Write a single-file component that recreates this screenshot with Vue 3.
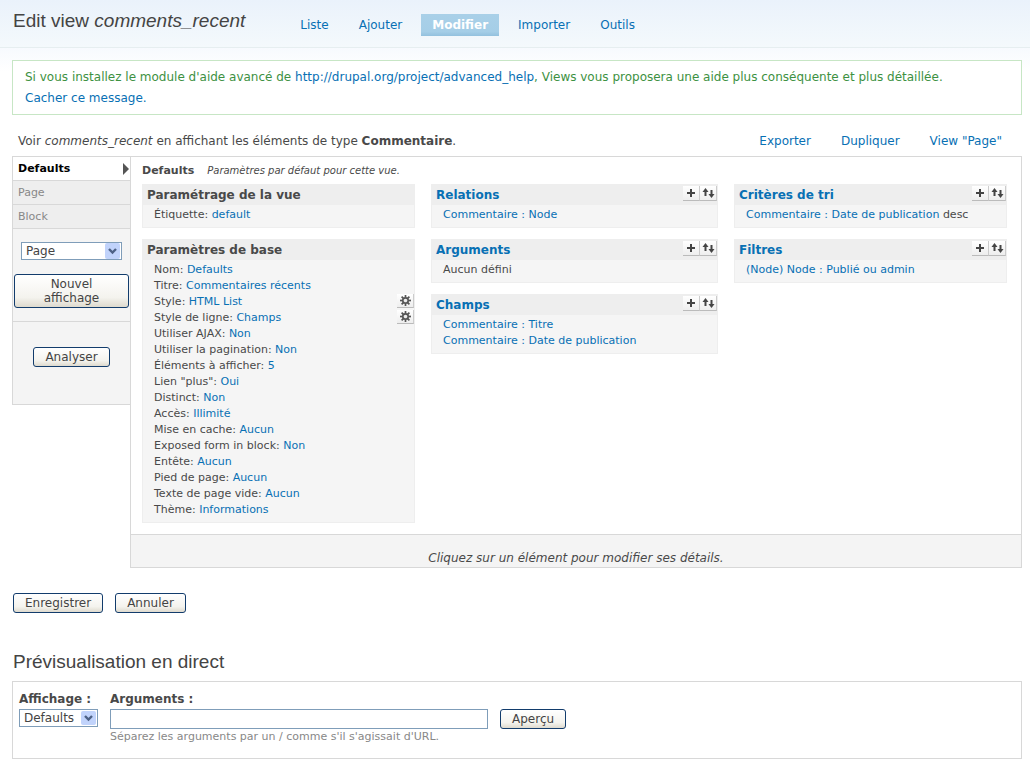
<script setup>
import { ref } from 'vue'

const tabs = [
  { label: 'Liste' },
  { label: 'Ajouter' },
  { label: 'Modifier', active: true },
  { label: 'Importer' },
  { label: 'Outils' },
]

const displays = ['Defaults', 'Page', 'Block']

const columns = [
  [
    {
      title: 'Paramétrage de la vue',
      items: [{ label: 'Étiquette:', link: 'default' }],
    },
    {
      title: 'Paramètres de base',
      items: [
        { label: 'Nom:', link: 'Defaults' },
        { label: 'Titre:', link: 'Commentaires récents' },
        { label: 'Style:', link: 'HTML List', gear: true },
        { label: 'Style de ligne:', link: 'Champs', gear: true },
        { label: 'Utiliser AJAX:', link: 'Non' },
        { label: 'Utiliser la pagination:', link: 'Non' },
        { label: 'Éléments à afficher:', link: '5' },
        { label: 'Lien "plus":', link: 'Oui' },
        { label: 'Distinct:', link: 'Non' },
        { label: 'Accès:', link: 'Illimité' },
        { label: 'Mise en cache:', link: 'Aucun' },
        { label: 'Exposed form in block:', link: 'Non' },
        { label: 'Entête:', link: 'Aucun' },
        { label: 'Pied de page:', link: 'Aucun' },
        { label: 'Texte de page vide:', link: 'Aucun' },
        { label: 'Thème:', link: 'Informations' },
      ],
    },
  ],
  [
    { title: 'Relations', editable: true, items: [{ link: 'Commentaire : Node' }] },
    { title: 'Arguments', editable: true, items: [{ label: 'Aucun défini' }] },
    {
      title: 'Champs',
      editable: true,
      items: [{ link: 'Commentaire : Titre' }, { link: 'Commentaire : Date de publication' }],
    },
  ],
  [
    {
      title: 'Critères de tri',
      editable: true,
      items: [{ link: 'Commentaire : Date de publication', after: 'desc' }],
    },
    { title: 'Filtres', editable: true, items: [{ link: '(Node) Node : Publié ou admin' }] },
  ],
]

const teeth = [0, 45, 90, 135, 180, 225, 270, 315]
const newDisplay = ref('Page')
const previewDisplay = ref('Defaults')
const args = ref('')
</script>

<template>
  <div class="page">
    <header class="header">
      <h1>Edit view <em>comments_recent</em></h1>
      <nav class="tabs">
        <a v-for="t in tabs" :key="t.label" href="#" :class="{ active: t.active }">{{ t.label }}</a>
      </nav>
    </header>

    <main class="content">
      <div class="message">
        Si vous installez le module d'aide avancé de
        <a href="#">http://drupal.org/project/advanced_help</a>, Views vous proposera une aide plus
        conséquente et plus détaillée. <br />
        <a href="#">Cacher ce message.</a>
      </div>

      <div class="summary">
        <p>
          Voir <em>comments_recent</em> en affichant les éléments de type
          <strong>Commentaire</strong>.
        </p>
        <nav class="actions">
          <a href="#">Exporter</a>
          <a href="#">Dupliquer</a>
          <a href="#">View "Page"</a>
        </nav>
      </div>

      <div class="editor">
        <aside class="sidebar">
          <a
            v-for="(d, i) in displays"
            :key="d"
            href="#"
            class="display"
            :class="{ active: i === 0 }"
          >
            {{ d }}
            <svg v-if="i === 0" width="7" height="12" viewBox="0 0 7 12">
              <path d="M0 0 L6 6 L0 12 Z" fill="#555" />
            </svg>
          </a>
          <div class="add">
            <span class="select wide">
              <select v-model="newDisplay" aria-label="Type d'affichage">
                <option>Page</option>
                <option>Block</option>
              </select>
              <svg class="arrow" width="15" height="16" viewBox="0 0 15 16">
                <rect width="15" height="16" rx="2" fill="#c1d3fb" />
                <path d="M4 6 L7.5 9.5 L11 6" fill="none" stroke="#4d6185" stroke-width="2.4" />
              </svg>
            </span>
            <button type="button" class="btn tall">Nouvel affichage</button>
          </div>
          <div class="analyze">
            <button type="button" class="btn">Analyser</button>
          </div>
        </aside>

        <section class="main">
          <div class="heading"><strong>Defaults</strong><em>Paramètres par défaut pour cette vue.</em></div>
          <div class="columns">
            <div v-for="(col, c) in columns" :key="c" class="column">
              <section v-for="box in col" :key="box.title" class="box">
                <div class="box-head">
                  <h2>
                    <a v-if="box.editable" href="#">{{ box.title }}</a>
                    <template v-else>{{ box.title }}</template>
                  </h2>
                  <div v-if="box.editable" class="tools">
                    <button type="button" class="tool" aria-label="Ajouter">
                      <svg width="17" height="15" viewBox="0 0 17 15">
                        <path d="M8 3 V11 M4 7 H12" stroke="#444" stroke-width="2" />
                      </svg>
                    </button>
                    <button type="button" class="tool" aria-label="Réordonner">
                      <svg width="17" height="15" viewBox="0 0 17 15">
                        <path d="M5.5 4 V10 M11.5 4 V9" stroke="#444" stroke-width="2" />
                        <path d="M2.5 6 L5.5 2 L8.5 6 Z M8.5 8 L11.5 12 L14.5 8 Z" fill="#444" />
                      </svg>
                    </button>
                  </div>
                </div>
                <ul>
                  <li v-for="(item, n) in box.items" :key="n">
                    <span>
                      {{ item.label }}
                      <a v-if="item.link" href="#">{{ item.link }}</a>
                      {{ item.after }}
                    </span>
                    <button v-if="item.gear" type="button" class="tool gear" aria-label="Configurer">
                      <svg width="17" height="13" viewBox="0 0 17 13">
                        <g transform="translate(8.5 6.5)">
                          <path
                            v-for="a in teeth"
                            :key="a"
                            d="M0 -3 V-5.5"
                            stroke="#555"
                            stroke-width="1.7"
                            :transform="`rotate(${a})`"
                          />
                          <circle r="2.7" fill="#eee" stroke="#555" stroke-width="1.7" />
                        </g>
                      </svg>
                    </button>
                  </li>
                </ul>
              </section>
            </div>
          </div>
          <div class="details">Cliquez sur un élément pour modifier ses détails.</div>
        </section>
      </div>

      <div class="form-actions">
        <button type="button" class="btn">Enregistrer</button>
        <button type="button" class="btn">Annuler</button>
      </div>

      <h2 class="preview-title">Prévisualisation en direct</h2>
      <form class="preview" @submit.prevent>
        <div class="field">
          <label for="preview-display">Affichage :</label>
          <span class="select">
            <select id="preview-display" v-model="previewDisplay">
              <option v-for="d in displays" :key="d">{{ d }}</option>
            </select>
            <svg class="arrow" width="15" height="14" viewBox="0 0 15 14">
              <rect width="15" height="14" rx="2" fill="#c1d3fb" />
              <path d="M4 5 L7.5 8.5 L11 5" fill="none" stroke="#4d6185" stroke-width="2.4" />
            </svg>
          </span>
        </div>
        <div class="field args">
          <label for="preview-args">Arguments :</label>
          <input id="preview-args" v-model="args" type="text" />
          <small>Séparez les arguments par un / comme s'il s'agissait d'URL.</small>
        </div>
        <button type="submit" class="btn">Aperçu</button>
      </form>
    </main>
  </div>
</template>

<style>
body {
  margin: 0;
  background: #fff;
}
</style>

<style scoped>
.page {
  font-family: Verdana, "DejaVu Sans", sans-serif;
  font-size: 12px;
  line-height: 20px;
  color: #494949;
  background: linear-gradient(#f7fafe, #fff) 0 48px / 100% 24px no-repeat;
}
.page * {
  box-sizing: border-box;
}
a {
  color: #0870b4;
  text-decoration: none;
}
.header {
  display: flex;
  height: 48px;
  padding-left: 13px;
  border-bottom: 1px solid #e6eef0;
  background: linear-gradient(#eaf2fb, #f4f9fc);
}
h1,
.preview-title {
  margin: 0;
  font: normal 19px/24px "Liberation Sans", Arial, sans-serif;
  color: #444;
}
h1 {
  padding-top: 9px;
}
.tabs {
  display: flex;
  gap: 8px;
  padding: 14px 0 0 44px;
  line-height: 23px;
}
.tabs a {
  height: 22px;
  padding: 0 11px;
}
.tabs .active {
  color: #fff;
  font-weight: bold;
  background: linear-gradient(#a9d0e8, #a5cee7 80%, #93c1de);
}
.content {
  padding: 12px 8px 8px 12px;
}
.message {
  padding: 6px 12px 5px;
  border: 1px solid #c7e6c5;
  background: #fff;
  color: #3d9142;
  line-height: 21px;
}
.summary {
  display: flex;
  justify-content: space-between;
  padding: 16px 20px 5px 6px;
}
.summary p {
  margin: 0;
}
.actions {
  display: flex;
  gap: 30px;
}
.editor {
  display: flex;
  align-items: flex-start;
}
.sidebar {
  flex: 0 0 118px;
  border: 1px solid #d8d8d8;
  border-right: 0;
  background: #f4f4f4;
}
.display {
  display: flex;
  align-items: center;
  justify-content: space-between;
  height: 24px;
  padding: 0 0 0 5px;
  border-bottom: 1px solid #d8d8d8;
  background: #eee;
  color: #888;
  font-size: 11px;
}
.display.active {
  background: #fff;
  color: #000;
  font-weight: bold;
}
.add {
  padding: 13px 1px;
  border-bottom: 1px solid #d8d8d8;
}
.analyze {
  height: 82px;
  padding-top: 25px;
  text-align: center;
}
.btn {
  height: 20px;
  padding: 0 11px;
  border: 1px solid #123c6c;
  border-radius: 3px;
  background: linear-gradient(#fff, #f4f3ee 70%, #dedace);
  color: #444;
  font: inherit;
  font-size: 12px;
  line-height: 18px;
}
.analyze .btn {
  display: block;
  margin: 0 auto;
}
.btn.tall {
  width: 100%;
  height: 34px;
  margin-top: 14px;
  line-height: 14px;
}
.select {
  display: block;
  position: relative;
}
.select.wide {
  margin: 0 7px;
}
select {
  display: block;
  width: 100%;
  height: 18px;
  padding: 0 22px 0 4px;
  border: 1px solid #7f9db9;
  border-radius: 0;
  appearance: none;
  background: #fff;
  color: #444;
  font: inherit;
  font-size: 12px;
  line-height: 16px;
}
.arrow {
  position: absolute;
  top: 2px;
  right: 2px;
  pointer-events: none;
}
.wide .arrow {
  top: 1px;
}
.main {
  flex: 1;
  min-width: 0;
  border: 1px solid #d8d8d8;
  background: #fff;
}
.heading {
  display: flex;
  gap: 13px;
  padding: 4px 11px 3px;
  font-size: 11px;
}
.heading em {
  font-size: 10px;
}
.columns {
  display: grid;
  grid-template-columns: 273fr 287fr 273fr;
  gap: 16px;
  padding: 0 14px 11px 11px;
}
.column {
  display: flex;
  flex-direction: column;
  gap: 11px;
}
.box {
  border: 1px solid #eee;
  background: #f5f5f5;
}
.box-head {
  display: flex;
  justify-content: space-between;
  height: 20px;
  padding-left: 4px;
  background: #eee;
}
h2 {
  margin: 0;
  font-size: 12px;
  line-height: 21px;
}
.tools {
  display: flex;
  padding: 1px 0 0;
}
.tool {
  width: 17px;
  height: 15px;
  padding: 0;
  border: 0;
  border-right: 1px solid #ccc;
  border-bottom: 1px solid #bbb;
  background: linear-gradient(#fff, #eee);
}
.tool svg {
  display: block;
}
.tool.gear {
  height: 14px;
}
ul {
  margin: 0;
  padding: 2px 0 4px 11px;
  list-style: none;
  font-size: 11px;
  line-height: 16px;
}
li {
  display: flex;
  justify-content: space-between;
  height: 16px;
}
.details {
  height: 33px;
  padding-top: 13px;
  border-top: 1px solid #d8d8d8;
  background: #f4f4f4;
  text-align: center;
  font-style: italic;
}
.form-actions {
  display: flex;
  gap: 12px;
  padding: 25px 1px 37px;
}
.preview-title {
  padding: 0 1px 7px;
}
.preview {
  display: flex;
  gap: 12px;
  height: 78px;
  padding: 7px 6px;
  border: 1px solid #d8d8d8;
}
.field {
  display: flex;
  flex-direction: column;
  flex: 0 0 auto;
}
.field.args {
  flex: 0 1 378px;
}
label {
  font-weight: bold;
  font-size: 12px;
}
input {
  height: 20px;
  border: 1px solid #7f9db9;
  font: inherit;
}
small {
  font-size: 11px;
  line-height: 15px;
  color: #888;
}
.preview .btn {
  margin-top: 20px;
}
</style>
